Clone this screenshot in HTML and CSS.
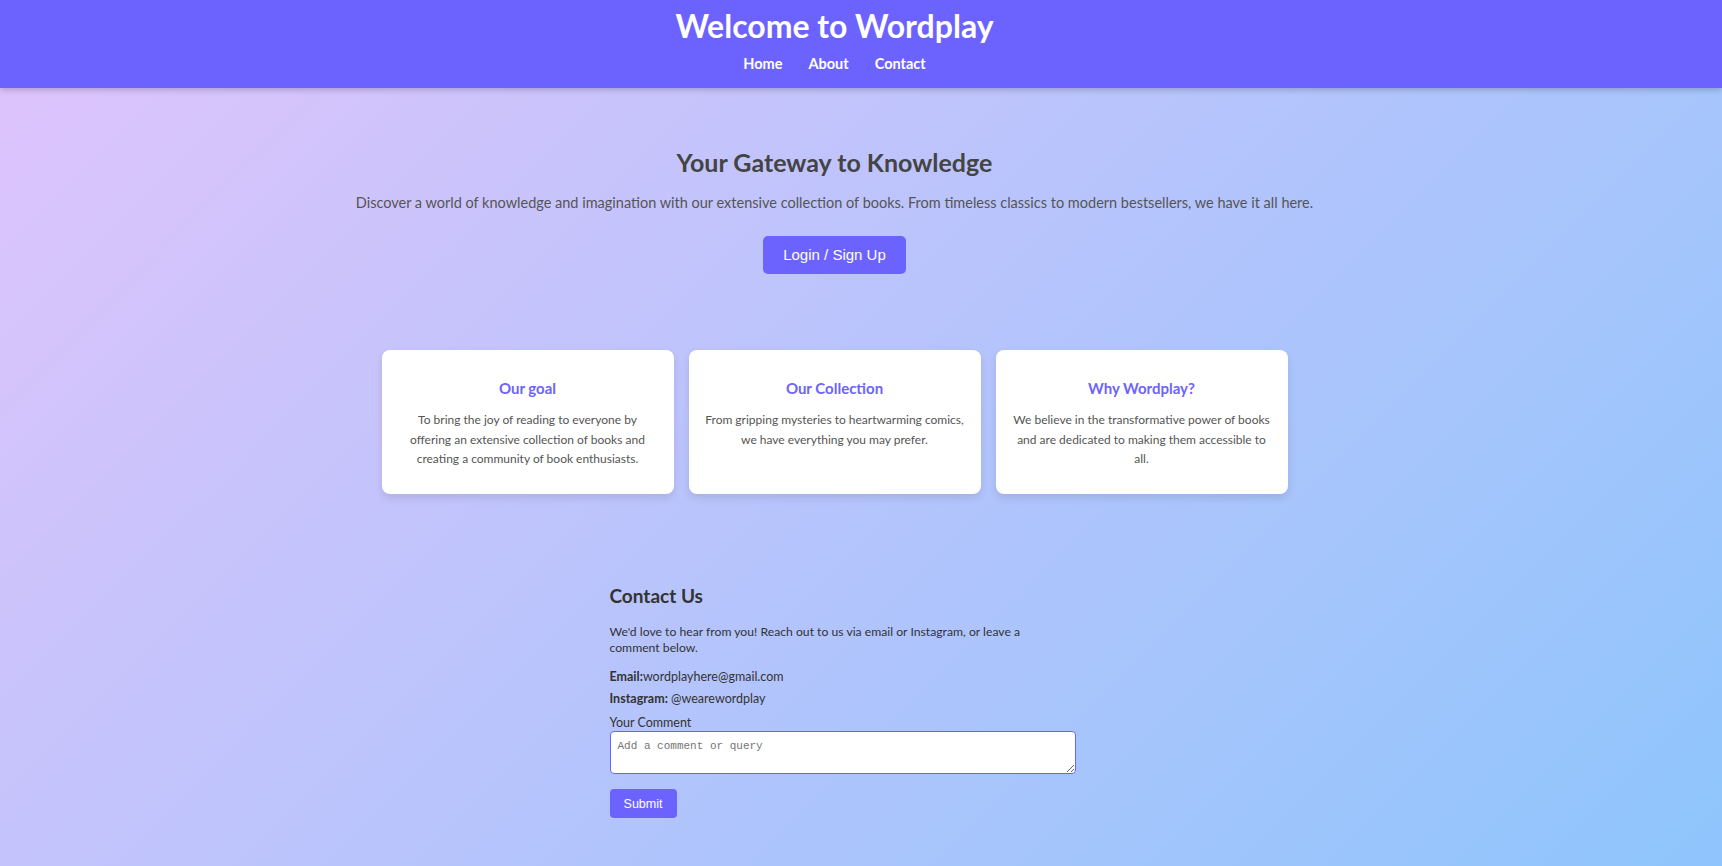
FILE: index.html
```html
<!DOCTYPE html>
<html lang="en">
<head>
<meta charset="utf-8">
<title>Wordplay</title>
<link rel="stylesheet" href="styles.css">
</head>
<body>
<header class="site-header">
  <h1 class="site-title">Welcome to Wordplay</h1>
  <nav class="site-nav">
    <a href="#">Home</a>
    <a href="#">About</a>
    <a href="#">Contact</a>
  </nav>
</header>
<main class="page">
  <section class="hero">
    <h2 class="hero-title">Your Gateway to Knowledge</h2>
    <p class="hero-text">Discover a world of knowledge and imagination with our extensive collection of books. From timeless classics to modern bestsellers, we have it all here.</p>
    <button class="btn-primary">Login / Sign Up</button>
  </section>
  <section class="features">
    <div class="card">
      <h3 class="card-title">Our goal</h3>
      <p class="card-text">To bring the joy of reading to everyone by<br>offering an extensive collection of books and creating a community of book enthusiasts.</p>
    </div>
    <div class="card">
      <h3 class="card-title">Our Collection</h3>
      <p class="card-text">From gripping mysteries to heartwarming comics, we have everything you may prefer.</p>
    </div>
    <div class="card">
      <h3 class="card-title">Why Wordplay?</h3>
      <p class="card-text">We believe in the transformative power of books and are dedicated to making them accessible to all.</p>
    </div>
  </section>
  <section class="contact">
    <h2 class="contact-title">Contact Us</h2>
    <p class="contact-text">We'd love to hear from you! Reach out to us via email or Instagram, or leave a comment below.</p>
    <p class="contact-line"><strong>Email:</strong>wordplayhere@gmail.com</p>
    <p class="contact-line"><strong>Instagram:</strong> @wearewordplay</p>
    <label class="contact-label" for="comment">Your Comment</label>
    <textarea id="comment" class="contact-input" placeholder="Add a comment or query"></textarea>
    <button class="btn-submit">Submit</button>
  </section>
</main>
</body>
</html>
```

FILE: styles.css
```css
* { box-sizing: border-box; }

html, body {
  margin: 0;
  padding: 0;
}

body {
  min-height: 100vh;
  font-family: Lato, "Open Sans", sans-serif;
  background: linear-gradient(135deg, #e0c3fc 0%, #8ec5fc 100%);
  color: #333;
}

.site-header {
  height: 88px;
  background: #6c63ff;
  box-shadow: 0 2px 6px rgba(0, 0, 0, 0.2);
  padding: 6px 53px 0 0;
  display: flex;
  flex-direction: column;
  align-items: center;
  position: relative;
}

.site-title {
  margin: 0;
  font-size: 32px;
  line-height: 40px;
  font-weight: 700;
  color: #fff;
}

.site-nav {
  margin-top: 8px;
  display: flex;
  gap: 26px;
  line-height: 20px;
}

.site-nav a {
  color: #fff;
  text-decoration: none;
  font-weight: 700;
  font-size: 14.5px;
}

.page {
  padding-right: 53px;
  display: flex;
  flex-direction: column;
  align-items: center;
}

.hero {
  padding-top: 59px;
  display: flex;
  flex-direction: column;
  align-items: center;
  text-align: center;
}

.hero-title {
  margin: 0;
  font-size: 25px;
  line-height: 30px;
  color: #444;
}

.hero-text {
  margin: 14px 0 0;
  font-size: 14.5px;
  line-height: 24px;
  color: #555;
}

.btn-primary {
  margin-top: 21px;
  background: #6c63ff;
  color: #fff;
  border: none;
  border-radius: 5px;
  font-family: "Liberation Sans", Arial, sans-serif;
  font-size: 15px;
  line-height: 18px;
  padding: 10px 16px;
  width: 143px;
  height: 38px;
}

.features {
  margin-top: 76px;
  display: flex;
  gap: 15px;
}

.card {
  width: 292px;
  min-height: 144px;
  background: #fff;
  border-radius: 8px;
  box-shadow: 0 4px 8px rgba(0, 0, 0, 0.1);
  padding: 28px 15px 25px;
  text-align: center;
}

.card-title {
  margin: 0 0 11px;
  font-size: 15px;
  line-height: 21px;
  color: #6c63ff;
}

.card-text {
  margin: 0;
  font-size: 12px;
  line-height: 19.5px;
  color: #555;
}

.contact {
  margin-top: 90px;
  width: 450px;
  display: flex;
  flex-direction: column;
  align-items: flex-start;
}

.contact-title {
  margin: 0;
  font-size: 19px;
  line-height: 24px;
  color: #333;
}

.contact-text {
  margin: 16px 0 0;
  font-size: 12.2px;
  line-height: 16px;
  color: #333;
}

.contact-line {
  margin: 13px 0 0;
  font-size: 12.5px;
  line-height: 16px;
  color: #333;
}

.contact-line + .contact-line {
  margin-top: 6px;
}

.contact-label {
  margin-top: 8px;
  font-size: 12.5px;
  line-height: 16px;
  color: #333;
}

.contact-input {
  box-sizing: content-box;
  width: 100%;
  height: 27px;
  padding: 7px;
  border: 1px solid #6c63ff;
  border-radius: 4px;
  background: #fff;
  font-family: "Liberation Mono", monospace;
  font-size: 11px;
  line-height: 14px;
  resize: vertical;
}

.contact-input::placeholder {
  color: #757575;
}

.btn-submit {
  margin-top: 15px;
  width: 67px;
  height: 29px;
  background: #6c63ff;
  color: #fff;
  border: none;
  border-radius: 4px;
  font-family: "Liberation Sans", Arial, sans-serif;
  font-size: 12.5px;
  padding: 0;
}
```
